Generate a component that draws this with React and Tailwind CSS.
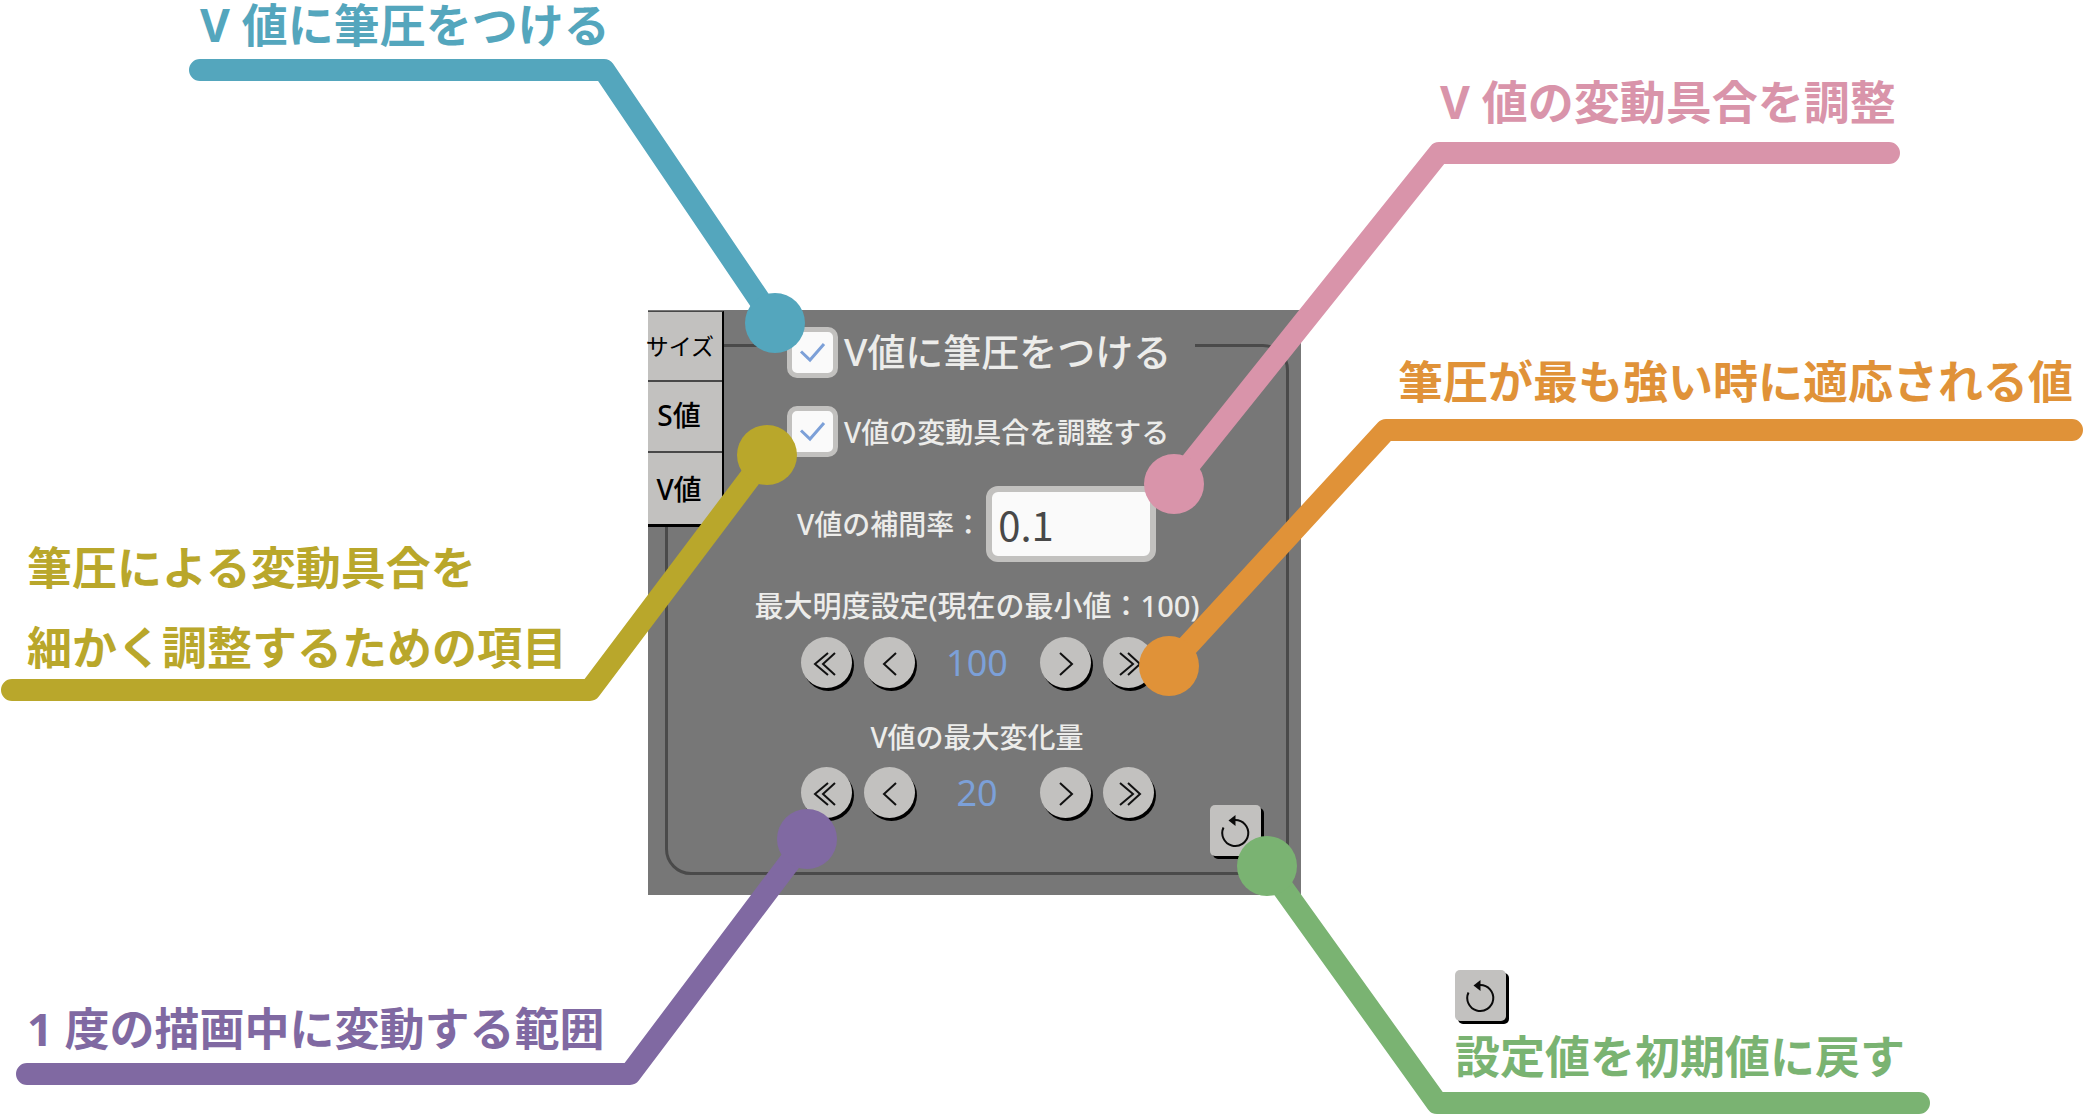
import React, { useState } from "react";

const LEADERS = [
  { color: "#54a6bd", points: "200,70 604,70 775,323", dot: [775, 323] },
  { color: "#b9a72b", points: "12,690 590,690 767,455", dot: [767, 455] },
  { color: "#8069a2", points: "27,1074 630,1074 807,839", dot: [807, 839] },
  { color: "#d994aa", points: "1889,153 1439,153 1174,484", dot: [1174, 484] },
  { color: "#e09238", points: "2072,430 1386,430 1169,666", dot: [1169, 666] },
  { color: "#7ab372", points: "1919,1103 1437,1103 1267,866", dot: [1267, 866] },
];

const ARROWS = {
  first: ["27,16 14,27 27,38", "34,16 22,27 34,38"],
  prev: ["32,16 20,27 32,38"],
  next: ["20,16 32,27 20,38"],
  last: ["17,16 30,27 17,38", "25,16 37,27 25,38"],
};

function Leaders() {
  return (
    <svg
      className="pointer-events-none absolute inset-0 w-full"
      viewBox="0 0 2084 1115"
      aria-hidden="true"
    >
      {LEADERS.map((l) => (
        <g key={l.color}>
          <polyline
            points={l.points}
            fill="none"
            stroke={l.color}
            strokeWidth="22"
            strokeLinecap="round"
            strokeLinejoin="round"
          />
          <circle cx={l.dot[0]} cy={l.dot[1]} r="30" fill={l.color} />
        </g>
      ))}
    </svg>
  );
}

function Check({ id }) {
  const [on, setOn] = useState(true);
  return (
    <span className="grid size-[51px] shrink-0">
      <input
        id={id}
        type="checkbox"
        checked={on}
        onChange={() => setOn(!on)}
        className="col-start-1 row-start-1 size-[51px] appearance-none rounded-[10px] border-[5px] border-[#c2c1bf] bg-[#fafafa]"
      />
      {on && (
        <svg
          viewBox="0 0 51 51"
          className="pointer-events-none col-start-1 row-start-1 size-[51px]"
          fill="none"
          stroke="#7ca0d8"
          strokeWidth="3"
          aria-hidden="true"
        >
          <path d="M14 24.5 23 33 37 17" />
        </svg>
      )}
    </span>
  );
}

function Round({ kind, label, onClick }) {
  return (
    <button
      type="button"
      aria-label={label}
      onClick={onClick}
      className="size-[51px] rounded-full bg-[#c2c1bf] shadow-[2px_3px_0_#000]"
    >
      <svg viewBox="0 0 51 51" fill="none" stroke="#111" strokeWidth="2" aria-hidden="true">
        {ARROWS[kind].map((p) => (
          <polyline key={p} points={p} />
        ))}
      </svg>
    </button>
  );
}

function Stepper({ name, initial }) {
  const [value, setValue] = useState(initial);
  return (
    <div className="flex items-center justify-center" role="group" aria-label={name}>
      <div className="flex gap-3">
        <Round kind="first" label="10減らす" onClick={() => setValue(value - 10)} />
        <Round kind="prev" label="1減らす" onClick={() => setValue(value - 1)} />
      </div>
      <output className="w-[125px] text-center text-[36px] leading-[51px] font-normal text-[#7ca0d8]">
        {value}
      </output>
      <div className="flex gap-3">
        <Round kind="next" label="1増やす" onClick={() => setValue(value + 1)} />
        <Round kind="last" label="10増やす" onClick={() => setValue(value + 10)} />
      </div>
    </div>
  );
}

function ResetButton() {
  return (
    <button
      type="button"
      aria-label="初期値に戻す"
      className="size-[51px] rounded-[5px] bg-[#c2c1bf] shadow-[3px_3px_0_#000]"
    >
      <svg viewBox="0 0 51 51" aria-hidden="true">
        <path
          d="M13.5 22.5A13 13 0 1 0 25 15"
          fill="none"
          stroke="#0a0a0a"
          strokeWidth="2"
        />
        <path d="M18.5 15.5 25.5 10V21Z" fill="#0a0a0a" />
      </svg>
    </button>
  );
}

function Tabs() {
  return (
    <div
      role="tablist"
      className="absolute top-px left-0 flex w-[76px] flex-col divide-y-2 divide-[#484848] border-t border-r-2 border-b-3 border-black border-t-[#484848] bg-[#c2c1bf] text-black"
    >
      <button type="button" role="tab" className="flex h-[70px] items-center justify-end pr-2 text-[23px] font-normal whitespace-nowrap">
        サイズ
      </button>
      <button type="button" role="tab" className="h-[71px] pr-3 pb-1 text-[28px] font-medium">
        S値
      </button>
      <button type="button" role="tab" aria-selected="true" className="h-[71px] pr-3 text-[28px] font-medium">
        V値
      </button>
    </div>
  );
}

function Panel() {
  return (
    <section className="relative mt-[310px] self-start bg-[#777] pt-[17px] pr-3 pb-5 pl-[17px] text-[28px] leading-7 font-medium text-[#ececea]">
      <fieldset className="flex min-w-0 flex-col rounded-[26px] border-3 border-[#4a4a4a]">
        <legend className="ml-[99px] h-9 pr-6 pl-5">
          <label htmlFor="pressure" className="flex items-center gap-[6px] text-[38px] leading-[46px] whitespace-nowrap">
            <Check id="pressure" />
            <span className="pb-1">V値に筆圧をつける</span>
          </label>
        </legend>
        <label htmlFor="adjust" className="mt-[43px] ml-[119px] flex items-center gap-[6px] whitespace-nowrap">
          <Check id="adjust" />
          V値の変動具合を調整する
        </label>
        <div className="mt-[29px] ml-[129px] flex items-center gap-1">
          <label htmlFor="rate" className="whitespace-nowrap">
            V値の補間率：
          </label>
          <input
            id="rate"
            type="text"
            defaultValue="0.1"
            className="h-[76px] w-[170px] rounded-xl border-[6px] border-[#c2c1bf] bg-[#fafafa] px-[6px] font-['Noto_Sans_CJK_JP',sans-serif] text-[40px] font-normal text-[#484848]"
          />
        </div>
        <p className="mt-[30px] mb-[17px] text-center text-[29px] whitespace-nowrap">
          最大明度設定(現在の最小値：100)
        </p>
        <Stepper name="最大明度設定" initial={100} />
        <p className="mt-[35px] mb-4 text-center">V値の最大変化量</p>
        <Stepper name="V値の最大変化量" initial={20} />
        <div className="-mt-[13px] mr-[25px] mb-4 flex self-end">
          <ResetButton />
        </div>
      </fieldset>
      <Tabs />
    </section>
  );
}

export default function App() {
  return (
    <main
      lang="ja"
      className="relative grid min-h-screen grid-cols-[minmax(0,648fr)_653px_minmax(0,783fr)] bg-white font-['Noto_Sans','Noto_Sans_CJK_JP',sans-serif]"
    >
      <div className="flex flex-col text-[45px] leading-[48px] font-bold whitespace-nowrap">
        <p className="ml-[200px] text-[46px] text-[#54a6bd]">V 値に筆圧をつける</p>
        <p className="mt-[480px] ml-[27px] leading-[80px] text-[#b9a72b]">
          筆圧による変動具合を
          <br />
          細かく調整するための項目
        </p>
        <p className="mt-[317px] ml-[27px] text-[#8069a2]">1 度の描画中に変動する範囲</p>
      </div>
      <Panel />
      <div className="flex flex-col text-[45px] leading-[48px] font-bold whitespace-nowrap">
        <p className="mt-[77px] ml-[139px] text-[46px] text-[#d994aa]">V 値の変動具合を調整</p>
        <p className="mt-[233px] ml-[97px] text-[#e09238]">筆圧が最も強い時に適応される値</p>
        <div className="mt-[564px] ml-[154px]">
          <div className="flex">
            <ResetButton />
          </div>
          <p className="mt-3 text-[#7ab372]">設定値を初期値に戻す</p>
        </div>
      </div>
      <Leaders />
    </main>
  );
}
